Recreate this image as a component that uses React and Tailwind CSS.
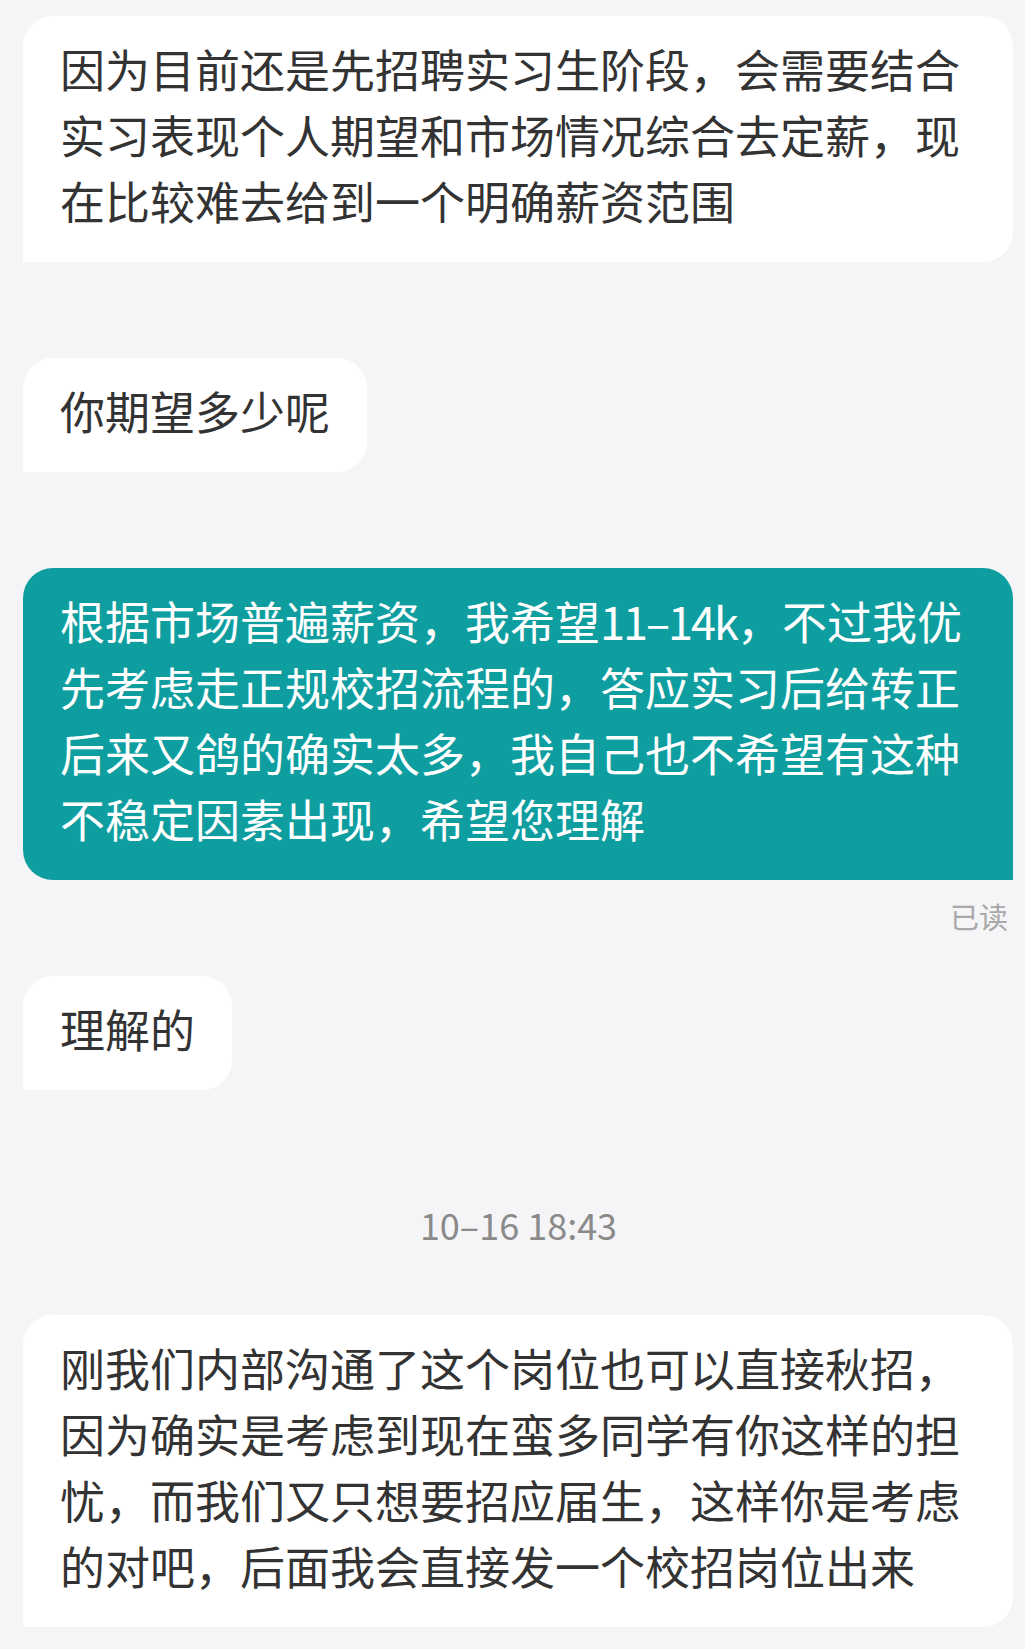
import React from 'react';

const FONT = { fontFamily: '"Noto Sans CJK SC", "Noto Sans", sans-serif' };

function Bubble({ lines, mine = false }) {
  return (
    <div
      className={`px-[37px] pt-[20px] pb-[28px] text-[45px] leading-[66px] ${
        mine
          ? 'bg-[#0f9ea0] text-white rounded-[30px] rounded-br-none self-stretch'
          : 'bg-white text-[#333333] rounded-[30px] rounded-bl-none'
      }`}
    >
      {lines.map((l, i) => (
        <div key={i} className="whitespace-nowrap">{l}</div>
      ))}
    </div>
  );
}

export default function App() {
  return (
    <div className="min-h-[1649px] bg-[#f5f5f7] pl-[23px] pr-[12px] pt-[16px] pb-[24px] flex flex-col items-start" style={FONT}>
      <div className="self-stretch">
        <Bubble
          lines={[
            '因为目前还是先招聘实习生阶段，会需要结合',
            '实习表现个人期望和市场情况综合去定薪，现',
            '在比较难去给到一个明确薪资范围',
          ]}
        />
      </div>

      <div className="mt-[96px]">
        <Bubble lines={['你期望多少呢']} />
      </div>

      <div className="mt-[96px] self-stretch flex flex-col">
        <Bubble
          mine
          lines={[
            <>根据市场普遍薪资，我希望<span className="tracking-[-2px]">11–14k</span>，不过我优</>,
            '先考虑走正规校招流程的，答应实习后给转正',
            '后来又鸽的确实太多，我自己也不希望有这种',
            '不稳定因素出现，希望您理解',
          ]}
        />
        <div className="self-end mt-[20px] mr-[5px] text-[29px] leading-[32px] text-[#a8a8a8]">已读</div>
      </div>

      <div className="mt-[44px]">
        <Bubble lines={['理解的']} />
      </div>

      <div className="self-stretch text-center mt-[114px] text-[36px] leading-[40px] text-[#8a8a8a] pl-[1px]">
        10–16 18:43
      </div>

      <div className="mt-[71px] self-stretch">
        <Bubble
          lines={[
            '刚我们内部沟通了这个岗位也可以直接秋招，',
            '因为确实是考虑到现在蛮多同学有你这样的担',
            '忧，而我们又只想要招应届生，这样你是考虑',
            '的对吧，后面我会直接发一个校招岗位出来',
          ]}
        />
      </div>
    </div>
  );
}
